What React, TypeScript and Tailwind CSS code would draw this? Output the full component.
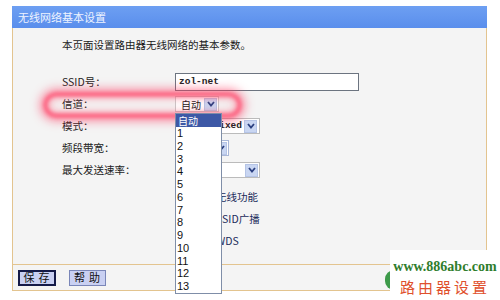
import React from "react";

const cjk = { fontFamily: '"Noto Sans CJK SC", "Liberation Sans", sans-serif' };

const channels = ["1", "2", "3", "4", "5", "6", "7", "8", "9", "10", "11", "12", "13"];

const Arrow = ({ className = "" }: { className?: string }) => (
  <span
    className={`flex items-center justify-center w-[13px] h-[13px] bg-[#c9d6f2] border border-[#b5c4e6] ${className}`}
  >
    <svg width="8" height="6" viewBox="0 0 8 6">
      <path d="M1 1 L4 4.5 L7 1" fill="none" stroke="#2a3f80" strokeWidth="1.8" />
    </svg>
  </span>
);

const Row = ({ label, children }: { label: string; children?: React.ReactNode }) => (
  <div className="flex items-center h-[22px]">
    <div className="w-[113px] text-[10.5px] text-[#222]">{label}</div>
    <div className="flex items-center">{children}</div>
  </div>
);

const Check = ({ text }: { text: string }) => (
  <div className="flex items-center h-[22px] pl-[113px]">
    <span className="w-[12px] h-[12px] border border-[#555] bg-white mr-[6px] ml-[2px]" />
    <span className="text-[10.5px] text-[#1a2a5a]">{text}</span>
  </div>
);

export default function App() {
  return (
    <div className="relative w-[500px] h-[300px] bg-white overflow-hidden" style={cjk}>
      <div className="ml-[12px] mt-[6px] w-[475px]">
        {/* title */}
        <div className="h-[22px] bg-gradient-to-b from-[#6d9ff2] to-[#5a8eec] flex items-center pl-[6px] text-[11px] text-[#eef3ff]">
          无线网络基本设置
        </div>

        {/* body */}
        <div className="bg-[#f4f4f4] border-l border-r border-[#e3c48f] h-[236px] pl-[49px]">
          <div className="pt-[9px] h-[43px] text-[10.5px] text-[#1a1a1a]">本页面设置路由器无线网络的基本参数。</div>
          <Row label="SSID号：">
            <div className="w-[184px] h-[18px] border border-[#6c7480] bg-white flex items-center pl-[3px]">
              <span className="text-[9.5px] font-bold text-[#222]" style={{ fontFamily: '"Liberation Mono", monospace' }}>
                zol-net
              </span>
            </div>
          </Row>
          <Row label="信道：">
            <div className="w-[44px] h-[16px] bg-white border border-[#c8c8c8] flex items-center justify-between pl-[5px] pr-[1px]">
              <span className="text-[10px] text-[#111]">自动</span>
              <Arrow />
            </div>
          </Row>
          <Row label="模式：">
            <div className="w-[85px] h-[16px] bg-white border border-[#bbb] flex items-center justify-end pr-[2px] gap-[2px]">
              <span className="text-[9.5px] font-bold text-[#222]" style={{ fontFamily: '"Liberation Mono", monospace' }}>
                mixed
              </span>
              <Arrow />
            </div>
          </Row>
          <Row label="频段带宽：">
            <div className="w-[54px] h-[16px] bg-white border border-[#aab8d8] flex items-center justify-end pr-[1px]">
              <Arrow className="w-[7px]" />
            </div>
          </Row>
          <Row label="最大发送速率：">
            <div className="w-[85px] h-[16px] bg-white border border-[#bbb] flex items-center justify-end pr-[1px]">
              <Arrow />
            </div>
          </Row>
          <div className="h-[5px]" />
          <Check text="开启无线功能" />
          <Check text="开启SSID广播" />
          <Check text="开启WDS" />
        </div>

        {/* footer */}
        <div className="bg-[#f4f4f4] border border-[#e3c48f] h-[27px] flex items-center pl-[5px] gap-[13px]">
          <button className="w-[38px] h-[16px] bg-[#c9d0f2] border-2 border-[#141a48] text-[11px] text-[#111] flex items-center justify-center tracking-[4px] pl-[3px]">
            保存
          </button>
          <button className="w-[37px] h-[16px] bg-[#c9d0f2] border border-[#7a86b8] text-[11px] text-[#111] flex items-center justify-center tracking-[4px] pl-[3px]">
            帮助
          </button>
        </div>
      </div>

      {/* red glow highlight */}
      <div className="absolute left-[44px] top-[93px] w-[197px] h-[24px] rounded-[12px] border-[3px] border-[#ff3a60] blur-[2px] shadow-[0_0_8px_4px_rgba(255,50,90,0.55),inset_0_0_6px_3px_rgba(255,80,110,0.45)]" />

      {/* open dropdown list */}
      <div className="absolute left-[175px] top-[113px] w-[47px] bg-white border border-[#7f8ea8] text-[11px] text-[#111]">
        <div className="h-[13px] bg-[#3d58a6] text-white text-[10px] leading-[13px] pl-[2px]">自动</div>
        {channels.map((c) => (
          <div
            key={c}
            className="h-[12.75px] leading-[12.75px] pl-[1px]"
            style={{ fontFamily: '"Liberation Sans", sans-serif' }}
          >
            {c}
          </div>
        ))}
      </div>

      {/* watermark */}
      <div className="absolute left-[385px] top-[270px] w-[18px] h-[20px] rounded-full bg-[#3d9a4a]" />
      <div className="absolute left-[390px] top-[250px] w-[110px] h-[50px] bg-white flex flex-col items-center pt-[9px]">
        <div
          className="text-[14px] font-bold text-[#2f7d2c] leading-[16px]"
          style={{ fontFamily: '"Liberation Serif", serif' }}
        >
          www.886abc.com
        </div>
        <div className="text-[15px] text-[#e0502c] tracking-[3px] leading-[20px] mt-[2px]" style={cjk}>
          路由器设置
        </div>
      </div>
    </div>
  );
}
